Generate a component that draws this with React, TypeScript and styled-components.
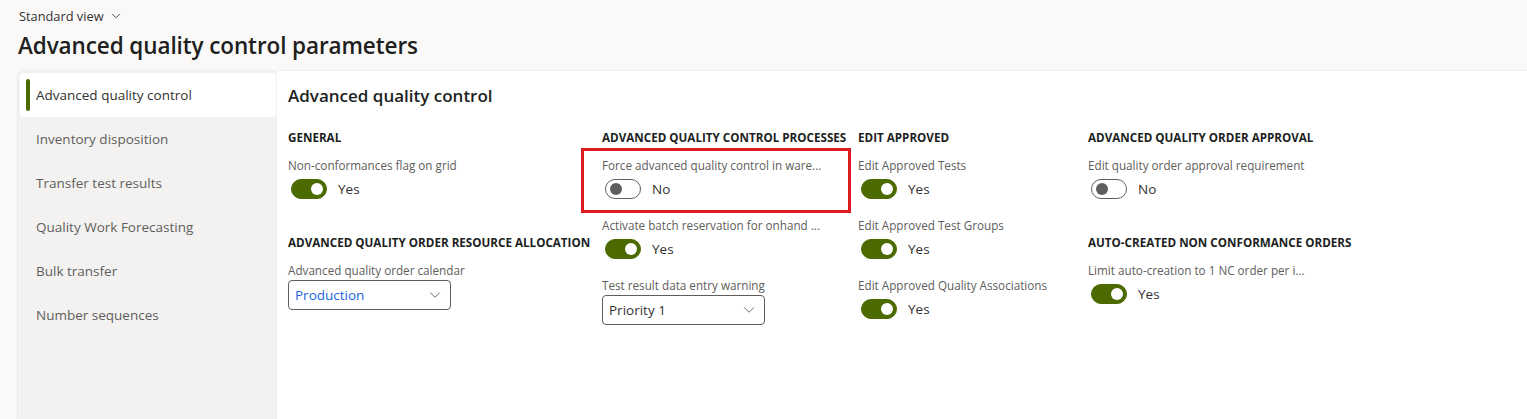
import React from 'react';
import styled, { createGlobalStyle } from 'styled-components';
import { ChevronDown } from 'lucide-react';

const GlobalStyle = createGlobalStyle`
  html, body {
    margin: 0;
    padding: 0;
    background: #faf9f8;
    font-family: "Open Sans", "Noto Sans", sans-serif;
    color: #323130;
  }
`;

// Layout
const Page = styled.div`
  height: 419px;
  display: flex;
  flex-direction: column;
  padding-left: 18px;
  overflow: hidden;
`;

const ViewSwitch = styled.div`
  display: flex;
  align-items: center;
  gap: 5px;
  margin-top: 7px;
  padding-left: 1px;
  font-size: 12.8px;
  line-height: 18px;
  color: #323130;
`;

const PageTitle = styled.h1`
  margin: 5px 0 0;
  font-size: 22.5px;
  line-height: 32px;
  font-weight: 600;
  color: #201f1e;
  letter-spacing: -0.1px;
`;

const Card = styled.div`
  flex: 1;
  margin-top: 9px;
  display: flex;
  border-radius: 6px 0 0 0;
  background: #ffffff;
  box-shadow: 0 0 2px rgba(0, 0, 0, 0.14), 0 1px 2px rgba(0, 0, 0, 0.08);
  overflow: hidden;
`;

const Nav = styled.nav`
  width: 259px;
  flex-shrink: 0;
  background: #f3f2f1;
  padding: 2px 1px 0 2px;
  box-sizing: border-box;
`;

const NavItem = styled.div<{ $active?: boolean }>`
  position: relative;
  height: 44px;
  display: flex;
  align-items: center;
  padding-left: 16px;
  border-radius: 4px;
  font-size: 13.5px;
  color: ${(p) => (p.$active ? '#323130' : '#605e5c')};
  background: ${(p) => (p.$active ? '#ffffff' : 'transparent')};

  &::before {
    content: '';
    display: ${(p) => (p.$active ? 'block' : 'none')};
    position: absolute;
    left: 6px;
    top: 6px;
    bottom: 6px;
    width: 4px;
    border-radius: 2px;
    background: #4b6a00;
  }
`;

const Content = styled.main`
  flex: 1;
  padding: 13px 0 0 11px;
`;

const SectionTitle = styled.h2`
  margin: 0 0 22px;
  font-size: 17px;
  line-height: 24px;
  font-weight: 600;
  color: #201f1e;
`;

const Columns = styled.div`
  display: grid;
  grid-template-columns: 314px 256px 230px 1fr;
`;

const Column = styled.div`
  display: flex;
  flex-direction: column;
`;

const Group = styled.section`
  & + & {
    margin-top: 18px;
  }
`;

const GroupHeader = styled.h3`
  margin: 0 0 11px;
  font-size: 11.65px;
  line-height: 16px;
  font-weight: 700;
  color: #201f1e;
  white-space: nowrap;
`;

const Field = styled.div<{ $highlight?: boolean }>`
  position: relative;
  margin-bottom: 16px;

  &::after {
    content: '';
    display: ${(p) => (p.$highlight ? 'block' : 'none')};
    position: absolute;
    top: -9px;
    left: -21px;
    right: 7px;
    bottom: -12px;
    border: 3px solid #e0191e;
    pointer-events: none;
  }
`;

const Label = styled.div`
  font-size: 11.7px;
  line-height: 16px;
  color: #605e5c;
  white-space: nowrap;
`;

const ToggleRow = styled.div`
  margin-top: 4px;
  height: 24px;
  display: flex;
  align-items: center;
  gap: 11px;
  padding-left: 3px;
  font-size: 13.5px;
  color: #323130;
`;

const Track = styled.span<{ $on: boolean }>`
  position: relative;
  width: 36px;
  height: 20px;
  box-sizing: border-box;
  border-radius: 10px;
  border: 1px solid ${(p) => (p.$on ? '#4b6a00' : '#605e5c')};
  background: ${(p) => (p.$on ? '#4b6a00' : '#ffffff')};

  &::after {
    content: '';
    position: absolute;
    top: 3px;
    left: ${(p) => (p.$on ? '19px' : '4px')};
    width: 12px;
    height: 12px;
    border-radius: 50%;
    background: ${(p) => (p.$on ? '#ffffff' : '#605e5c')};
  }
`;

const Select = styled.div<{ $link?: boolean }>`
  margin-top: 2px;
  width: 163px;
  height: 30px;
  box-sizing: border-box;
  display: flex;
  align-items: center;
  justify-content: space-between;
  padding: 0 6px 0 6px;
  border: 1px solid #605e5c;
  border-radius: 4px;
  background: #ffffff;
  font-size: 13.5px;
  color: ${(p) => (p.$link ? '#2266e3' : '#323130')};

  svg {
    color: #605e5c;
  }
`;

const navItems = [
  'Advanced quality control',
  'Inventory disposition',
  'Transfer test results',
  'Quality Work Forecasting',
  'Bulk transfer',
  'Number sequences',
];

const Toggle = ({ label, on, highlight }: { label: string; on: boolean; highlight?: boolean }) => (
  <Field $highlight={highlight}>
    <Label>{label}</Label>
    <ToggleRow>
      <Track $on={on} />
      <span>{on ? 'Yes' : 'No'}</span>
    </ToggleRow>
  </Field>
);

const Dropdown = ({ label, value, link }: { label: string; value: string; link?: boolean }) => (
  <Field>
    <Label>{label}</Label>
    <Select $link={link}>
      <span>{value}</span>
      <ChevronDown size={18} strokeWidth={1.2} />
    </Select>
  </Field>
);

const App = () => {
  return (
    <>
      <GlobalStyle />
      <Page>
        <ViewSwitch>
          Standard view
          <ChevronDown size={14} strokeWidth={1.5} />
        </ViewSwitch>
        <PageTitle>Advanced quality control parameters</PageTitle>

        <Card>
          <Nav>
            {navItems.map((item, i) => (
              <NavItem key={item} $active={i === 0}>
                {item}
              </NavItem>
            ))}
          </Nav>

          <Content>
            <SectionTitle>Advanced quality control</SectionTitle>
            <Columns>
              <Column>
                <Group>
                  <GroupHeader>GENERAL</GroupHeader>
                  <Toggle label="Non-conformances flag on grid" on />
                </Group>
                <Group>
                  <GroupHeader>ADVANCED QUALITY ORDER RESOURCE ALLOCATION</GroupHeader>
                  <Dropdown label="Advanced quality order calendar" value="Production" link />
                </Group>
              </Column>

              <Column>
                <Group>
                  <GroupHeader>ADVANCED QUALITY CONTROL PROCESSES</GroupHeader>
                  <Toggle label="Force advanced quality control in ware..." on={false} highlight />
                  <Toggle label="Activate batch reservation for onhand ..." on />
                  <Dropdown label="Test result data entry warning" value="Priority 1" />
                </Group>
              </Column>

              <Column>
                <Group>
                  <GroupHeader>EDIT APPROVED</GroupHeader>
                  <Toggle label="Edit Approved Tests" on />
                  <Toggle label="Edit Approved Test Groups" on />
                  <Toggle label="Edit Approved Quality Associations" on />
                </Group>
              </Column>

              <Column>
                <Group>
                  <GroupHeader>ADVANCED QUALITY ORDER APPROVAL</GroupHeader>
                  <Toggle label="Edit quality order approval requirement" on={false} />
                </Group>
                <Group>
                  <GroupHeader>AUTO-CREATED NON CONFORMANCE ORDERS</GroupHeader>
                  <Toggle label="Limit auto-creation to 1 NC order per i..." on />
                </Group>
              </Column>
            </Columns>
          </Content>
        </Card>
      </Page>
    </>
  );
};

export default App;
